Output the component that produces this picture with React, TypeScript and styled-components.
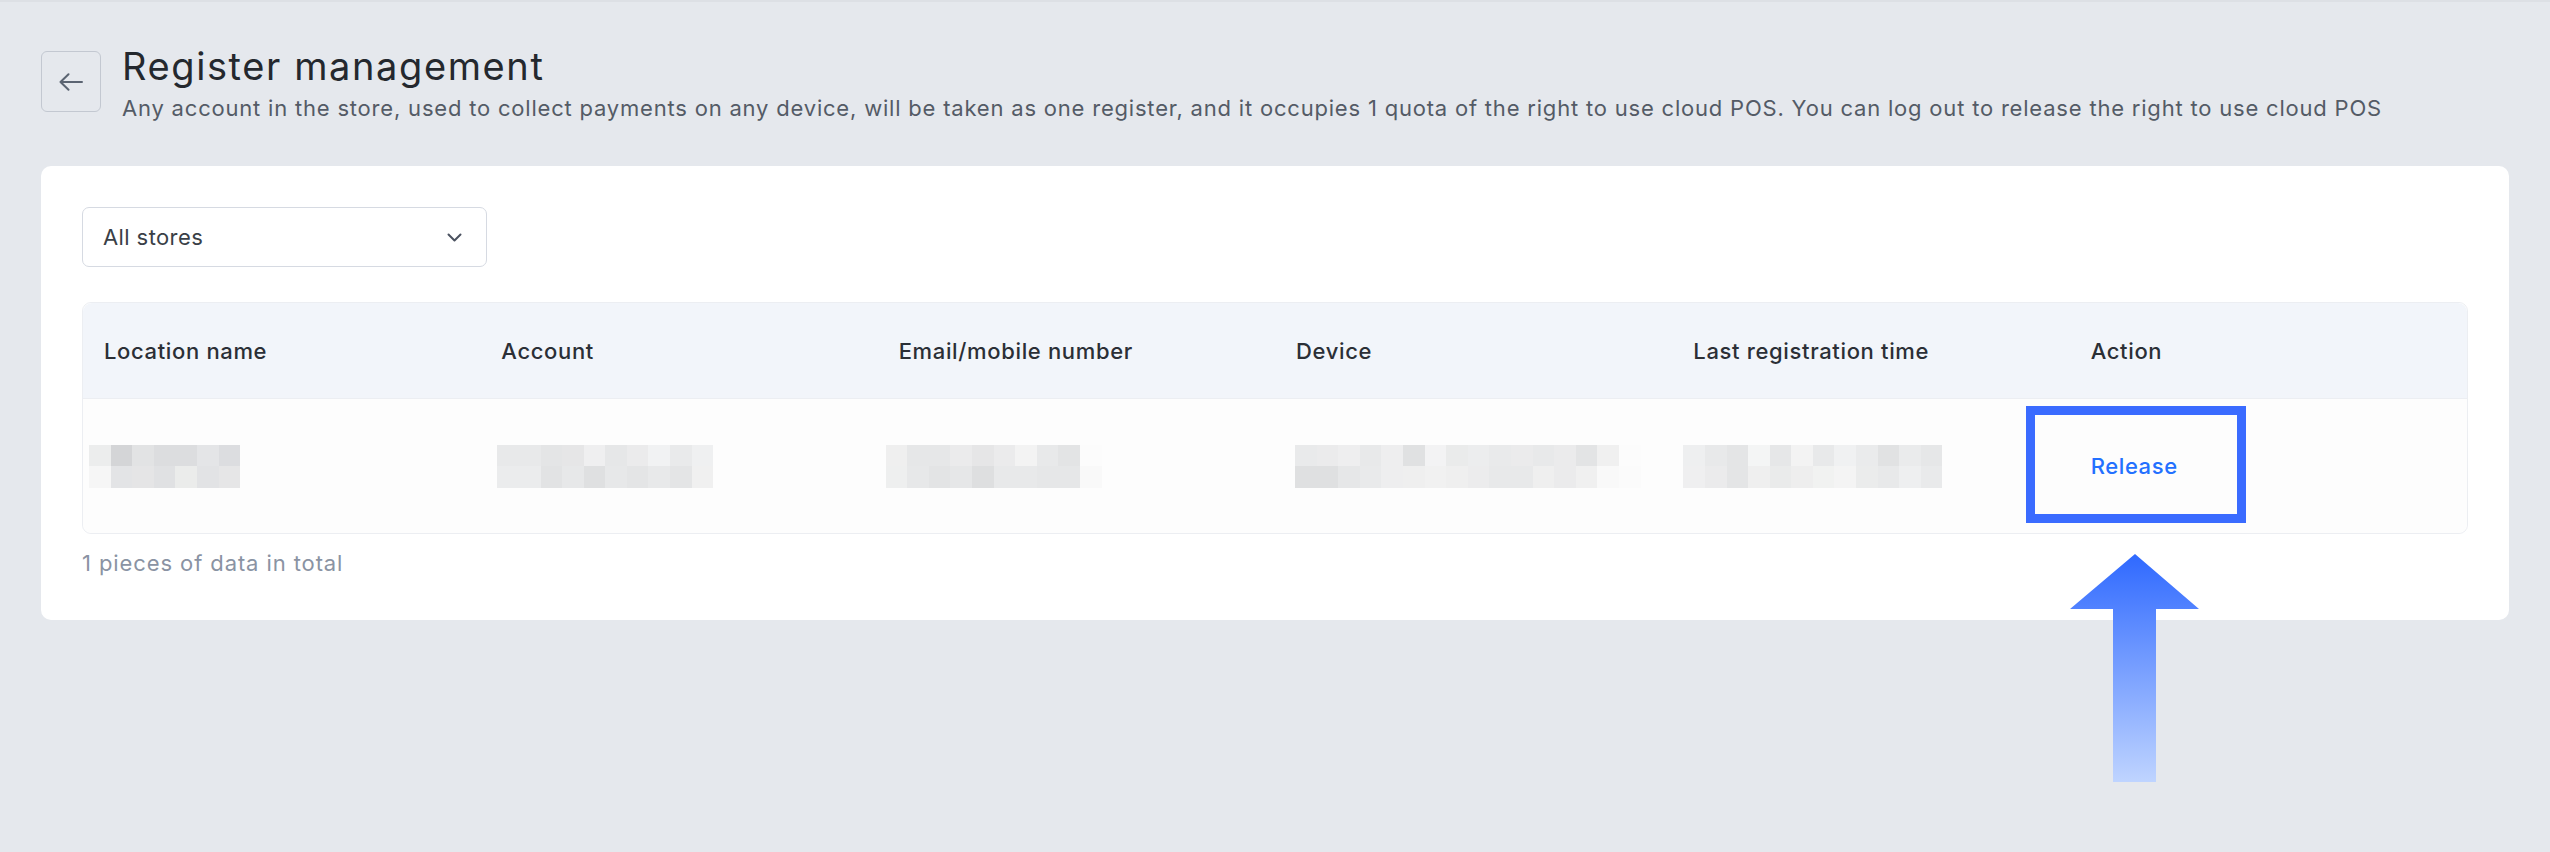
import styled, { createGlobalStyle } from 'styled-components';

const GlobalStyle = createGlobalStyle`
  html, body {
    margin: 0;
    padding: 0;
    background: #e5e8ed;
  }
  body {
    font-family: Inter, 'Liberation Sans', sans-serif;
    color: #2b2f36;
  }
`;

type Mosaic = { offset: number; top: string[]; bottom: string[] };

const columns = [
  'Location name',
  'Account',
  'Email/mobile number',
  'Device',
  'Last registration time',
  'Action',
];

// blurred cell contents, two rows of pixel blocks each
const blurred: Mosaic[] = [
  {
    offset: -15,
    top: ['#eceded', '#d4d5d7', '#e2e3e4', '#dcdddf', '#dcdddf', '#e4e5e7', '#dcdde0'],
    bottom: ['#f6f6f6', '#e3e4e6', '#e5e5e6', '#e0e1e3', '#ebeceb', '#e2e3e5', '#e6e6e7'],
  },
  {
    offset: -4,
    top: ['#e8e9ea', '#e8e9ea', '#e4e5e6', '#e6e6e7', '#efeff0', '#e6e7e8', '#ebebec', '#f1f2f3', '#e9eaeb', '#eff0f1'],
    bottom: ['#ebeced', '#ebeced', '#e2e3e4', '#e7e8e9', '#dfe0e1', '#e7e8e9', '#e4e5e6', '#e8e9ea', '#e4e5e6', '#f0f0f0'],
  },
  {
    offset: -13,
    top: ['#efefef', '#e6e7e8', '#e6e7e8', '#ebebec', '#e6e6e7', '#ebebec', '#f3f3f3', '#e8e9ea', '#e3e4e5', '#fcfcfc'],
    bottom: ['#eeefef', '#e7e8e9', '#e3e4e5', '#e6e7e8', '#dedfe0', '#e8e9ea', '#e8e9ea', '#e6e7e8', '#e6e7e8', '#f9f9f9'],
  },
  {
    offset: -1,
    top: ['#e9eaeb', '#ebebec', '#eeeeef', '#e8e9ea', '#eeeeef', '#e0e1e2', '#f3f3f4', '#eaebeb', '#ecedee', '#e9eaeb', '#ebebec', '#e8e9ea', '#ebebec', '#e3e4e5', '#f0f0f0', '#fcfcfc'],
    bottom: ['#dfe0e1', '#dfe0e1', '#e6e7e8', '#e9eaeb', '#eeeeef', '#efefef', '#f1f1f1', '#efefef', '#ececed', '#e8e9ea', '#e8e9ea', '#efefef', '#ebebec', '#f0f0f0', '#f9f9f9', '#fbfbfb'],
  },
  {
    offset: -10,
    top: ['#eeeff0', '#e8e9ea', '#e4e5e6', '#f4f5f5', '#e6e7e8', '#f3f3f3', '#e8e9ea', '#f0f1f2', '#eaebec', '#e1e2e3', '#eaebec', '#e6e7e8'],
    bottom: ['#efeff0', '#ebebec', '#e4e5e6', '#efefef', '#eaebeb', '#eeeeee', '#f1f2f1', '#f4f4f4', '#ebecec', '#e8e9ea', '#eeeff0', '#e9eaeb'],
  },
];

function BackIcon() {
  return (
    <svg width="24" height="18" viewBox="0 0 24 18" fill="none">
      <path
        d="M23 9H1.5M9.5 1.2 1.5 9l8 7.8"
        stroke="#5b6472"
        strokeWidth="2"
        strokeLinecap="round"
        strokeLinejoin="round"
      />
    </svg>
  );
}

function Chevron() {
  return (
    <svg width="15" height="9" viewBox="0 0 15 9" fill="none">
      <path
        d="M1.5 1.5 7.5 7.5l6-6"
        stroke="#4b5260"
        strokeWidth="2"
        strokeLinecap="round"
        strokeLinejoin="round"
      />
    </svg>
  );
}

function PointerArrow() {
  return (
    <ArrowSvg width="129" height="228" viewBox="0 0 129 228">
      <defs>
        <linearGradient id="arrowFill" x1="0" y1="0" x2="0" y2="1">
          <stop offset="0" stopColor="#2f69ff" />
          <stop offset="1" stopColor="#bfd4ff" />
        </linearGradient>
      </defs>
      <path d="M65 0 129 55H86V228H43V55H0Z" fill="url(#arrowFill)" />
    </ArrowSvg>
  );
}

export default function App() {
  return (
    <>
      <GlobalStyle />
      <Page>
        <Header>
          <BackButton>
            <BackIcon />
          </BackButton>
          <Heading>
            <Title>Register management</Title>
            <Subtitle>
              Any account in the store, used to collect payments on any device, will be taken as
              one register, and it occupies 1 quota of the right to use cloud POS. You can log out
              to release the right to use cloud POS
            </Subtitle>
          </Heading>
        </Header>

        <Card>
          <Select>
            <span>All stores</span>
            <Chevron />
          </Select>

          <Table>
            <HeadRow>
              {columns.map((c) => (
                <HeadCell key={c}>{c}</HeadCell>
              ))}
            </HeadRow>
            <BodyRow>
              {blurred.map((m, i) => (
                <BodyCell key={i}>
                  <MosaicBlock offset={m.offset}>
                    <MosaicLine>
                      {m.top.map((c, j) => (
                        <Pixel key={j} color={c} />
                      ))}
                    </MosaicLine>
                    <MosaicLine>
                      {m.bottom.map((c, j) => (
                        <Pixel key={j} color={c} />
                      ))}
                    </MosaicLine>
                  </MosaicBlock>
                </BodyCell>
              ))}
              <BodyCell>
                <ReleaseLink>
                  Release
                  <Highlight />
                </ReleaseLink>
              </BodyCell>
            </BodyRow>
          </Table>

          <Total>1 pieces of data in total</Total>
        </Card>

        <PointerArrow />
      </Page>
    </>
  );
}

const Page = styled.div`
  position: relative;
  min-height: 100vh;
  box-sizing: border-box;
  padding: 49px 41px 41px;
  border-top: 2px solid #dde0e5;
`;

const Header = styled.div`
  display: flex;
  align-items: flex-start;
  gap: 21px;
`;

const BackButton = styled.button`
  width: 60px;
  height: 61px;
  flex: none;
  display: flex;
  align-items: center;
  justify-content: center;
  background: transparent;
  border: 1.5px solid #c3c8d1;
  border-radius: 6px;
  padding: 0;
  cursor: pointer;
`;

const Heading = styled.div`
  display: flex;
  flex-direction: column;
`;

const Title = styled.h1`
  margin: -8px 0 0;
  font-size: 38px;
  line-height: 46px;
  letter-spacing: 1.6px;
  font-weight: 400;
  color: #24282e;
`;

const Subtitle = styled.p`
  margin: 6px 0 0;
  font-size: 22px;
  line-height: 27px;
  letter-spacing: 0.8px;
  color: #545b66;
`;

const Card = styled.div`
  margin-top: 44px;
  background: #ffffff;
  border-radius: 10px;
  padding: 41px 41px 43px;
`;

const Select = styled.div`
  width: 405px;
  height: 60px;
  box-sizing: border-box;
  display: flex;
  align-items: center;
  justify-content: space-between;
  padding: 0 24px 0 20px;
  border: 1.5px solid #d6dae2;
  border-radius: 7px;
  font-size: 22px;
  letter-spacing: 0.4px;
  color: #3a3f47;
`;

const Table = styled.div`
  margin-top: 35px;
  border: 1px solid #eceef2;
  border-radius: 9px;
`;

const HeadRow = styled.div`
  display: grid;
  grid-template-columns: repeat(6, 1fr);
  height: 95px;
  background: #f2f5fa;
  border-radius: 9px 9px 0 0;
  border-bottom: 1px solid #eceef2;
`;

const HeadCell = styled.div`
  display: flex;
  align-items: center;
  padding-left: 21px;
  font-size: 22px;
  letter-spacing: 0.65px;
  font-weight: 500;
  color: #2b2f36;
`;

const BodyRow = styled.div`
  display: grid;
  grid-template-columns: repeat(6, 1fr);
  height: 134px;
  background: #fdfdfd;
  border-radius: 0 0 9px 9px;
`;

const BodyCell = styled.div`
  display: flex;
  align-items: center;
  padding-left: 21px;
`;

const MosaicBlock = styled.div<{ offset: number }>`
  display: flex;
  flex-direction: column;
  margin-left: ${({ offset }) => offset}px;
`;

const MosaicLine = styled.div`
  display: flex;
`;

const Pixel = styled.div<{ color: string }>`
  width: 21.6px;
  height: 21.5px;
  background: ${({ color }) => color};
`;

const ReleaseLink = styled.span`
  position: relative;
  font-size: 22px;
  line-height: 27px;
  letter-spacing: 0.6px;
  font-weight: 500;
  color: #2370ff;
  cursor: pointer;
`;

const Highlight = styled.span`
  position: absolute;
  top: -47px;
  bottom: -43px;
  left: -65px;
  right: -68px;
  border: 9px solid #3a6bff;
  pointer-events: none;
`;

const Total = styled.div`
  margin-top: 16px;
  font-size: 22px;
  line-height: 27px;
  letter-spacing: 0.9px;
  color: #8a93a3;
`;

const ArrowSvg = styled.svg`
  position: absolute;
  left: 2070px;
  top: 552px;
`;
